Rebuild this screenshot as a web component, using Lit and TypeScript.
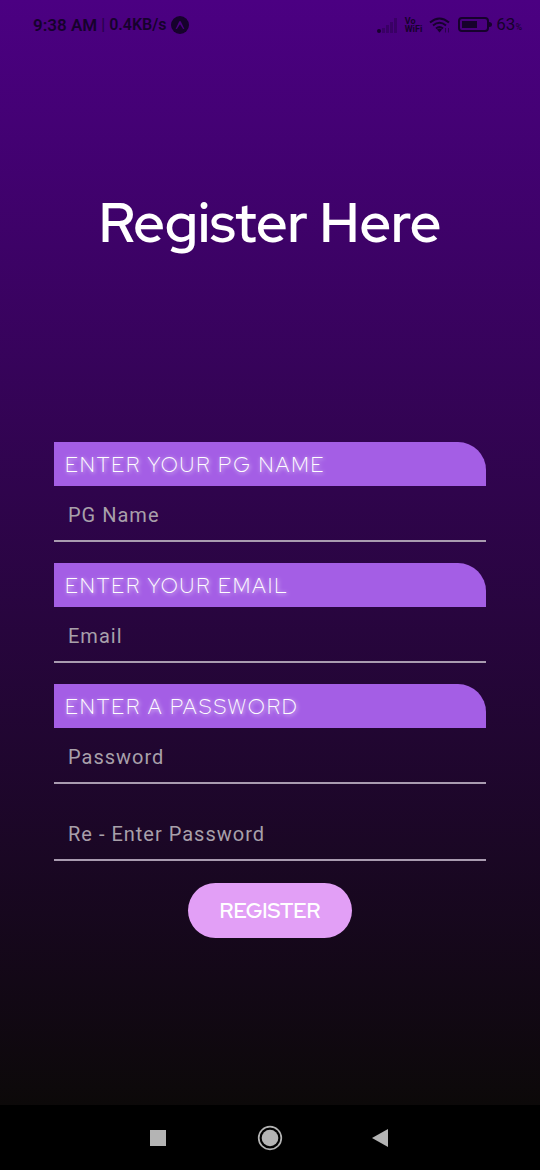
import { LitElement, html, css } from "lit";
import { customElement, property } from "lit/decorators.js";

@customElement("status-bar")
class StatusBar extends LitElement {
  static styles = css`
    :host {
      display: flex;
      justify-content: space-between;
      align-items: center;
      height: 50px;
      padding: 0 18px 0 33px;
      box-sizing: border-box;
      color: #16022c;
      font-family: Roboto, sans-serif;
      font-size: 17px;
      line-height: 20px;
    }
    .group {
      display: flex;
      align-items: center;
    }
    .left {
      gap: 4px;
      font-weight: 600;
    }
    .bar {
      font-weight: 400;
      font-size: 16px;
      opacity: 0.7;
    }
    .speed {
      font-size: 16px;
    }
    .right {
      gap: 7px;
    }
    .vowifi {
      display: flex;
      flex-direction: column;
      font-size: 9px;
      line-height: 8px;
      font-weight: 700;
    }
    .percent {
      font-size: 9px;
    }
    .level {
      margin-left: -3px;
    }
    svg {
      display: block;
    }
  `;

  render() {
    return html`
      <div class="group left">
        <span>9:38 AM</span><span class="bar">|</span
        ><span class="speed">0.4KB/s</span>
        <svg width="18" height="18" viewBox="0 0 18 18">
          <circle cx="9" cy="9" r="9" fill="currentColor" />
          <path
            d="M4.600 13 8.200 5.600Q9 4.400 9.800 5.600L13.400 13Q12 13.400 11 11.200L9 8.200 7 11.200Q6 13.400 4.600 13Z"
            fill="#4a0080"
          />
        </svg>
      </div>
      <div class="group right">
        <svg width="21" height="16" viewBox="0 0 21 16" fill="currentColor">
          <circle cx="2" cy="14" r="2" />
          <g opacity="0.3">
            <rect x="5" y="11" width="3" height="5" />
            <rect x="9" y="8" width="3" height="8" />
            <rect x="13" y="5" width="3" height="11" />
            <rect x="17" y="1" width="3" height="15" />
          </g>
        </svg>
        <span class="vowifi"><span>Vo</span><span>WiFi</span></span>
        <svg width="22" height="16" viewBox="0 0 22 16">
          <g fill="none" stroke="currentColor" stroke-width="2">
            <path d="M1 5.500Q10.500-2.500 20 5.500" />
            <path d="M4 8.500Q10.500 3 17 8.500" />
            <path d="M7 11.500Q10.500 8.500 14 11.500" />
          </g>
          <path d="M8 12.500Q10.500 10.500 13 12.500L10.500 15.500Z" fill="currentColor" />
          <path
            d="M16.500 15.500V11M19.500 11V15.500"
            stroke="currentColor"
            opacity="0.6"
          />
        </svg>
        <svg width="34" height="16" viewBox="0 0 34 16">
          <rect
            x="1"
            y="1"
            width="29"
            height="13"
            rx="3"
            fill="none"
            stroke="currentColor"
            stroke-width="2"
          />
          <rect x="4" y="4" width="15" height="7" fill="currentColor" />
          <path d="M31 5Q34 5 34 7.500T31 10Z" fill="currentColor" />
        </svg>
        <span class="level">63<span class="percent">%</span></span>
      </div>
    `;
  }
}

@customElement("form-field")
class FormField extends LitElement {
  @property() heading = "";
  @property() placeholder = "";
  @property() type = "text";

  static styles = css`
    :host {
      display: block;
    }
    .label {
      display: block;
      height: 44px;
      padding: 0 11px;
      border-top-right-radius: 28px;
      background: #a45ee5;
      color: #fff;
      font-family: "Red Hat Display", Inter, sans-serif;
      font-weight: 300;
      font-size: 21px;
      line-height: 46px;
      letter-spacing: 2px;
      text-shadow: 1px 1px 4px rgba(255, 255, 255, 0.8);
    }
    .input {
      display: block;
      width: 100%;
      height: 56px;
      box-sizing: border-box;
      margin: 0;
      padding: 4px 14px 0;
      border: 0;
      border-bottom: 2px solid #a99bb0;
      border-radius: 0;
      outline: 0;
      background: transparent;
      color: #fff;
      font-family: Roboto, sans-serif;
      font-size: 20px;
      letter-spacing: 1px;
    }
    .input::placeholder {
      color: #a8a0aa;
      opacity: 1;
    }
  `;

  render() {
    return html`
      ${this.heading
        ? html`<label class="label" for="field">${this.heading}</label>`
        : null}
      <input
        class="input"
        id="field"
        type=${this.type}
        placeholder=${this.placeholder}
        aria-label=${this.heading || this.placeholder}
      />
    `;
  }
}

@customElement("navigation-bar")
class NavigationBar extends LitElement {
  static styles = css`
    :host {
      display: flex;
      justify-content: center;
      align-items: center;
      gap: 84px;
      height: 65px;
      background: #000;
    }
    .key {
      display: block;
      padding: 0;
      border: 0;
      background: none;
      color: #b4b4b4;
    }
    svg {
      display: block;
    }
  `;

  render() {
    return html`
      <button class="key" aria-label="Recent apps">
        <svg width="28" height="28" viewBox="0 0 28 28">
          <rect x="6" y="6" width="16" height="16" fill="currentColor" />
        </svg>
      </button>
      <button class="key" aria-label="Home">
        <svg width="28" height="28" viewBox="0 0 28 28">
          <circle
            cx="14"
            cy="14"
            r="11.300"
            fill="none"
            stroke="currentColor"
            stroke-width="1.700"
          />
          <circle cx="14" cy="14" r="8.300" fill="currentColor" />
        </svg>
      </button>
      <button class="key" aria-label="Back">
        <svg width="28" height="28" viewBox="0 0 28 28">
          <path d="M4 14 20 5V23Z" fill="currentColor" />
        </svg>
      </button>
    `;
  }
}

@customElement("app-root")
class AppRoot extends LitElement {
  static styles = css`
    :host {
      display: flex;
      flex-direction: column;
      min-height: 100vh;
      background: #000;
    }
    .screen {
      flex: 1;
      display: flex;
      flex-direction: column;
      background: linear-gradient(#4b0082, #0c0909);
    }
    .title {
      margin: 0;
      padding: 139px 0 185px;
      color: #fff;
      text-align: center;
      font-family: "Red Hat Display", Inter, sans-serif;
      font-weight: 600;
      font-size: 55px;
      line-height: 68px;
    }
    .form {
      display: flex;
      flex-direction: column;
      gap: 21px;
      padding: 0 10% 32px;
    }
    .submit {
      align-self: center;
      height: 55px;
      margin: 1px 0 0;
      padding: 0 32px;
      border: 0;
      border-radius: 28px;
      background: #e29ff6;
      color: #fff;
      font-family: "Red Hat Display", Inter, sans-serif;
      font-weight: 600;
      font-size: 21px;
    }
  `;

  render() {
    return html`
      <div class="screen">
        <status-bar></status-bar>
        <h1 class="title">Register Here</h1>
        <form class="form" @submit=${(e: Event) => e.preventDefault()}>
          <form-field
            heading="ENTER YOUR PG NAME"
            placeholder="PG Name"
          ></form-field>
          <form-field
            heading="ENTER YOUR EMAIL"
            placeholder="Email"
            type="email"
          ></form-field>
          <form-field
            heading="ENTER A PASSWORD"
            placeholder="Password"
            type="password"
          ></form-field>
          <form-field
            placeholder="Re - Enter Password"
            type="password"
          ></form-field>
          <button class="submit" type="submit">REGISTER</button>
        </form>
      </div>
      <navigation-bar></navigation-bar>
    `;
  }
}
